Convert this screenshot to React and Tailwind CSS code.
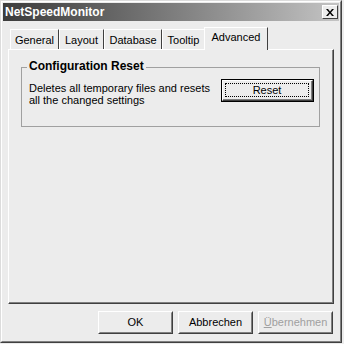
import React from 'react';

const font = { fontFamily: '"Liberation Sans", Arial, sans-serif' };

function Btn({ children, disabled }) {
  return (
    <div className="w-[75px] h-[23px] border border-t-white border-l-white border-r-[#404040] border-b-[#404040]">
      <div className="w-full h-full border border-t-[#ececec] border-l-[#ececec] border-r-[#808080] border-b-[#808080] flex items-center justify-center">
        {disabled ? (
          <span className="text-[#a0a0a0]">
            <span className="underline">Ü</span>bernehmen
          </span>
        ) : (
          <span className="text-black">{children}</span>
        )}
      </div>
    </div>
  );
}

function Tab({ label, w }) {
  return (
    <div
      className="h-[20px] border-t border-l border-t-white border-l-white border-r border-r-[#404040] flex items-center justify-center pt-[1px]"
      style={{ width: w }}
    >
      {label}
    </div>
  );
}

export default function App() {
  return (
    <div className="w-[344px] h-[344px] bg-[#ececec] text-[11px] leading-[13px] text-black" style={font}>
      <div className="w-[342px] h-[343px] border border-t-[#dcdcdc] border-l-[#dcdcdc] border-r-[#404040] border-b-[#404040]">
        <div className="w-full h-full border border-t-white border-l-white border-r-[#808080] border-b-[#808080] p-[1px] flex flex-col">
          {/* title bar */}
          <div className="h-[18px] bg-gradient-to-r from-[#3c3c3c] to-[#c4c4c4] flex items-center justify-between pl-[2px] pr-[1px]">
            <span className="text-white font-bold text-[12px]">NetSpeedMonitor</span>
            <div className="w-[16px] h-[14px] bg-[#ececec] border border-t-white border-l-white border-r-[#404040] border-b-[#404040] flex items-center justify-center">
              <svg width="8" height="7" viewBox="0 0 8 7">
                <path d="M0 0h2l2 2.5L6 0h2L5 3.5 8 7H6L4 4.5 2 7H0l3-3.5z" fill="#000" />
              </svg>
            </div>
          </div>

          {/* tabs */}
          <div className="flex pl-[7px] mt-[5px] h-[23px] items-end">
            <Tab label="General" w={49} />
            <Tab label="Layout" w={45} />
            <Tab label="Database" w={58} />
            <Tab label="Tooltip" w={43} />
            <div className="w-[64px] h-[23px] -ml-[1px] border-t border-l border-t-white border-l-white border-r border-r-[#404040] bg-[#ececec] flex items-start justify-center pt-[3px] relative z-10 mb-[-1px]">
              Advanced
            </div>
          </div>

          {/* panel */}
          <div className="mx-[5px] h-[255px] border border-t-white border-l-white border-r-[#404040] border-b-[#404040]">
            <div className="w-full h-full border-r border-b border-r-[#808080] border-b-[#808080] pt-[17px] px-[12px]">
              <div className="relative h-[60px] border border-[#a0a0a0] pl-[7px] pt-[14px] flex items-start justify-between pr-[5px]">
                <span className="absolute -top-[8px] left-[5px] bg-[#ececec] px-[2px] font-bold text-[12px]">Configuration Reset</span>
                <div className="leading-[12px]">
                  Deletes all temporary files and resets
                  <br />
                  all the changed settings
                </div>
                <div className="w-[93px] h-[23px] border border-black -mt-[3px]">
                  <div className="w-full h-full border border-t-white border-l-white border-r-[#404040] border-b-[#404040]">
                    <div className="w-full h-full border-r border-b border-r-[#808080] border-b-[#808080] p-[2px]">
                      <div className="w-full h-full border border-dotted border-black flex items-center justify-center">
                        Reset
                      </div>
                    </div>
                  </div>
                </div>
              </div>
            </div>
          </div>

          {/* buttons */}
          <div className="flex justify-end gap-[5px] pr-[6px] mt-[7px]">
            <Btn>OK</Btn>
            <Btn>Abbrechen</Btn>
            <Btn disabled />
          </div>
        </div>
      </div>
    </div>
  );
}
